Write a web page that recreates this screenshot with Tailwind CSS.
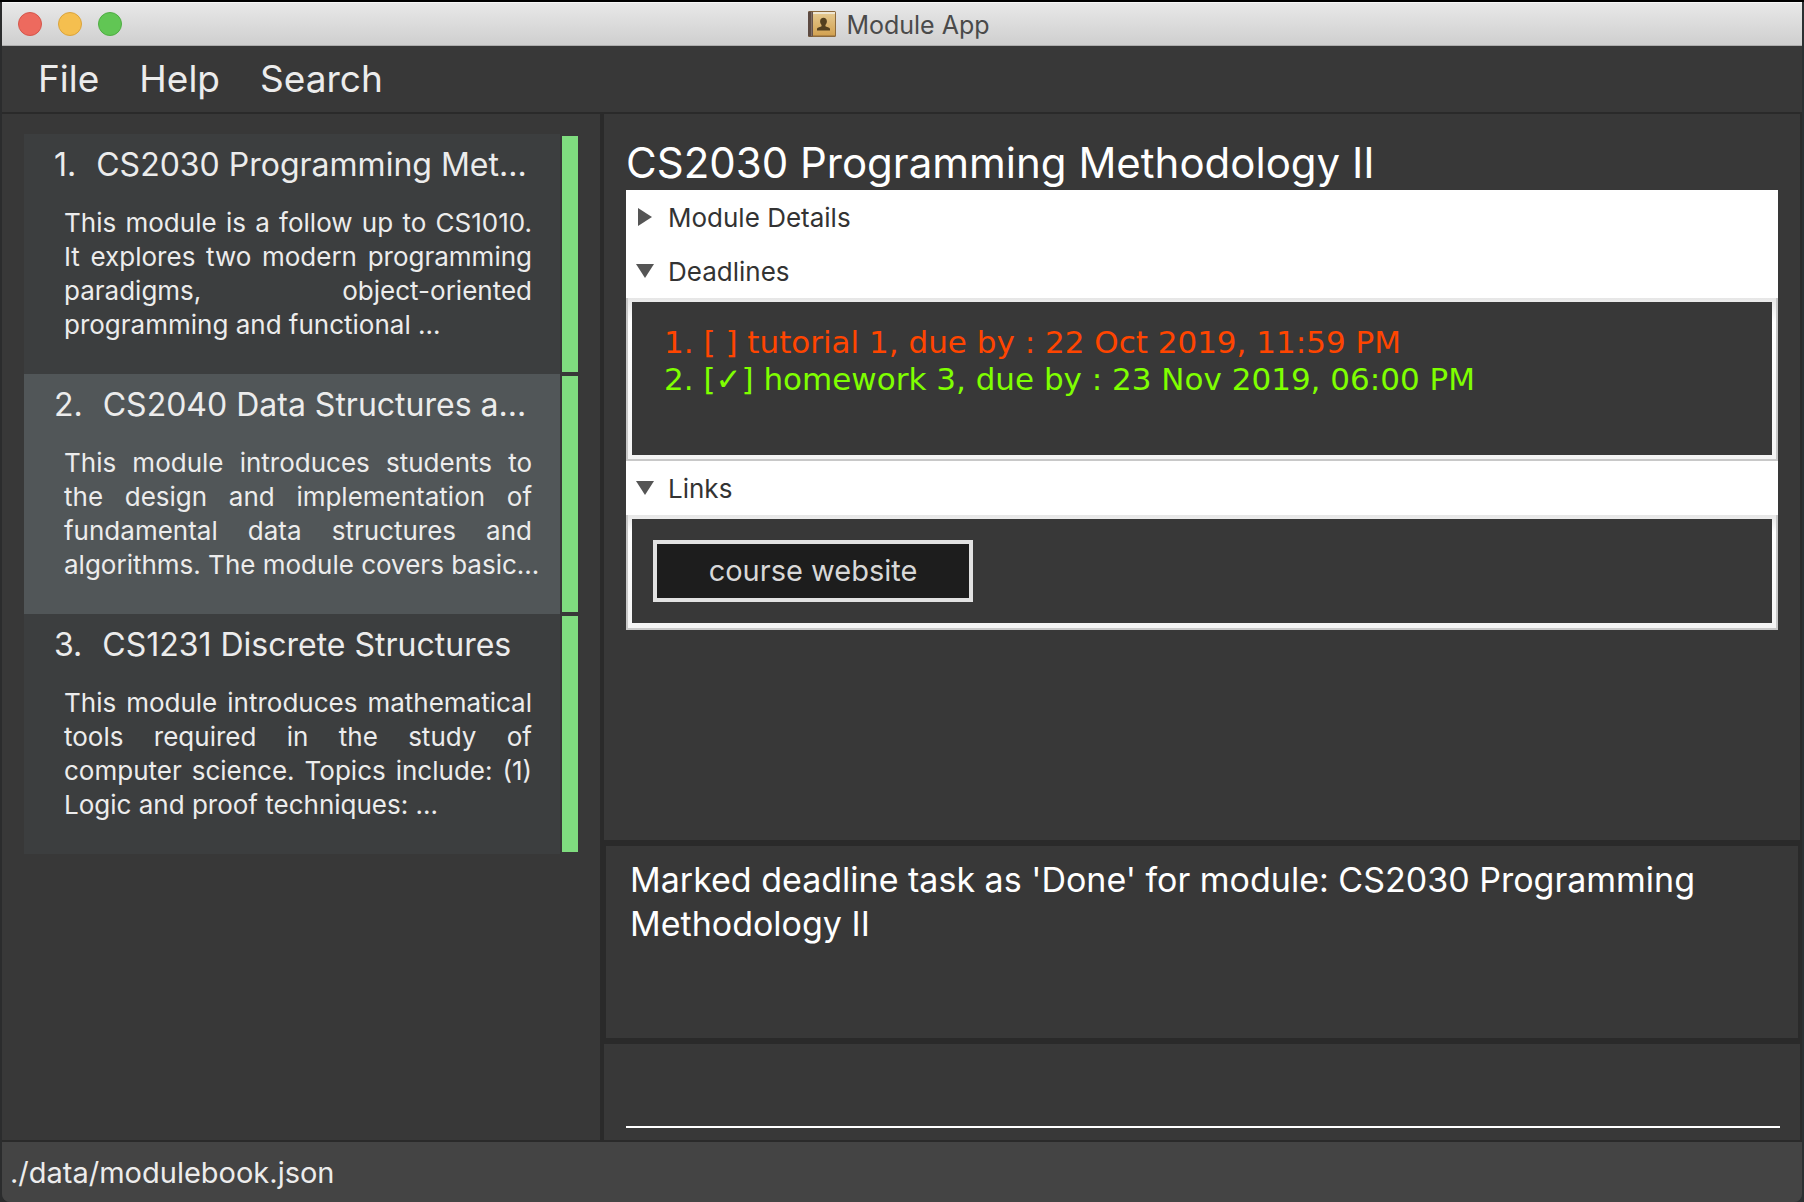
<!DOCTYPE html>
<html lang="en">
<head>
<meta charset="utf-8">
<title>Module App</title>
<script src="https://cdn.jsdelivr.net/npm/@tailwindcss/browser@4"></script>
</head>
<body class="bg-[#2b2c2d]">
<div class="h-screen bg-linear-to-r from-[#2b2c2d] to-[#2b3032] border-t-2 border-t-black px-[2px] font-['Inter',sans-serif] text-[#ececec]">
  <div class="h-full flex flex-col rounded-b-lg overflow-hidden bg-[#383838]">

    <header class="relative h-11 shrink-0 flex items-center justify-center gap-[10px] pr-[6px] bg-linear-to-b from-[#e8e8e8] to-[#cfcfcf] border-t border-t-[#f6f6f6] border-b border-b-[#aeaeae] text-[#4a4a4a]">
      <div class="absolute left-4 flex gap-4">
        <button aria-label="Close" class="size-6 rounded-full bg-[#ed6a5e] border border-[#d5564b]"></button>
        <button aria-label="Minimize" class="size-6 rounded-full bg-[#f5bf4f] border border-[#dba43c]"></button>
        <button aria-label="Zoom" class="size-6 rounded-full bg-[#61c654] border border-[#4fad43]"></button>
      </div>
      <svg class="w-7 h-[26px]" viewBox="0 0 28 26" aria-hidden="true">
        <defs><linearGradient id="cover" x1="0" y1="0" x2="0" y2="1"><stop offset="0" stop-color="#e3c68c"/><stop offset="1" stop-color="#d3a251"/></linearGradient></defs>
        <rect x="0" y="0" width="28" height="26" rx="1.5" fill="#8d6a3c"/>
        <rect x="5" y="1" width="22" height="2" fill="#efe6d3"/>
        <rect x="5" y="3" width="22" height="21.500" fill="url(#cover)"/>
        <rect x="0" y="0.500" width="5" height="25" rx="1" fill="#5c4a42"/>
        <rect x="3.200" y="1" width="1" height="24" fill="#8c7a70"/>
        <path d="M9 19.500v-1.600c0-1.200 2.500-1.700 4.200-2.400.5-.3.500-1.200.2-1.700-.9-1-1.300-2.200-1.300-3.500 0-2.200 1.400-3.600 3.400-3.600s3.400 1.400 3.400 3.600c0 1.300-.4 2.500-1.300 3.500-.3.500-.3 1.400.2 1.700 1.700.7 4.200 1.200 4.200 2.400v1.600z" fill="#54401f"/>
      </svg>
      <h1 class="pt-[2px] text-[25px] leading-8">Module App</h1>
    </header>

    <nav class="h-[68px] shrink-0 flex items-center gap-10 px-9 border-b-2 border-[#2a2a2a] text-[37px] leading-[44px]">
      <button>File</button>
      <button>Help</button>
      <button>Search</button>
    </nav>

    <main class="flex-1 min-h-0 grid grid-cols-[602fr_1198fr]">
      <aside class="min-w-0 border-r-4 border-[#2a2a2a] px-[22px] pt-5">
        <ul>
          <li class="h-60 flex gap-[2px]">
            <article class="flex-1 min-w-0 bg-[#3c3e3f] pt-2 whitespace-nowrap">
              <h2 class="flex gap-5 pl-[30px] text-[32px] leading-[46px]"><span>1.</span><span>CS2030 Programming Met...</span></h2>
              <p class="pt-[18px] pl-10 pr-7 text-[26px] leading-[34px]">
                <span class="block [text-align-last:justify]">This module is a follow up to CS1010.</span>
                <span class="block [text-align-last:justify]">It explores two modern programming</span>
                <span class="block [text-align-last:justify]">paradigms, object-oriented</span>
                <span class="block">programming and functional ...</span>
              </p>
            </article>
            <div class="w-4 my-[2px] bg-[#7fdc7f]"></div>
          </li>
          <li class="h-60 flex gap-[2px]">
            <article class="flex-1 min-w-0 bg-[#515658] pt-2 whitespace-nowrap">
              <h2 class="flex gap-5 pl-[30px] text-[32px] leading-[46px]"><span>2.</span><span>CS2040 Data Structures a...</span></h2>
              <p class="pt-[18px] pl-10 pr-7 text-[26px] leading-[34px]">
                <span class="block [text-align-last:justify]">This module introduces students to</span>
                <span class="block [text-align-last:justify]">the design and implementation of</span>
                <span class="block [text-align-last:justify]">fundamental data structures and</span>
                <span class="block">algorithms. The module covers basic...</span>
              </p>
            </article>
            <div class="w-4 my-[2px] bg-[#7fdc7f]"></div>
          </li>
          <li class="h-60 flex gap-[2px]">
            <article class="flex-1 min-w-0 bg-[#3c3e3f] pt-2 whitespace-nowrap">
              <h2 class="flex gap-5 pl-[30px] text-[32px] leading-[46px]"><span>3.</span><span>CS1231 Discrete Structures</span></h2>
              <p class="pt-[18px] pl-10 pr-7 text-[26px] leading-[34px]">
                <span class="block [text-align-last:justify]">This module introduces mathematical</span>
                <span class="block [text-align-last:justify]">tools required in the study of</span>
                <span class="block [text-align-last:justify]">computer science. Topics include: (1)</span>
                <span class="block">Logic and proof techniques: ...</span>
              </p>
            </article>
            <div class="w-4 my-[2px] bg-[#7fdc7f]"></div>
          </li>
        </ul>
      </aside>

      <div class="min-w-0 min-h-0 flex flex-col border-r-2 border-[#2a2a2a]">
        <section class="flex-1 min-h-0 px-[22px] pt-[22px]">
          <h2 class="text-[42px] leading-[54px] text-white whitespace-nowrap">CS2030 Programming Methodology II</h2>
          <details class="bg-white text-[#333]">
            <summary class="h-[54px] flex items-center gap-3 pl-[10px] text-[26px]">
              <svg class="size-5" viewBox="0 0 20 20" aria-hidden="true"><path d="M2 1L16 10L2 19z" fill="#555"/></svg>Module Details
            </summary>
          </details>
          <details open class="bg-white text-[#333]">
            <summary class="h-[54px] flex items-center gap-3 pl-[10px] text-[26px]">
              <svg class="size-5" viewBox="0 0 20 20" aria-hidden="true"><path d="M0 3H18L9 17z" fill="#555"/></svg>Deadlines
            </summary>
            <div class="border-x-2 border-b-2 border-[#c8c8c8] bg-linear-to-b from-[#e6e6e6] via-white via-15% to-[#f4f4f4] p-1">
              <ol class="h-[153px] bg-[#383838] pl-8 pt-[22px] font-['DejaVu_Sans',sans-serif] text-[31px] leading-[37px]">
                <li class="text-[#ff4500]">1. [ ] tutorial 1, due by : 22 Oct 2019, 11:59 PM</li>
                <li class="text-[#7fff00]">2. [✓] homework 3, due by : 23 Nov 2019, 06:00 PM</li>
              </ol>
            </div>
          </details>
          <details open class="bg-white text-[#333]">
            <summary class="h-[54px] flex items-center gap-3 pl-[10px] text-[26px]">
              <svg class="size-5" viewBox="0 0 20 20" aria-hidden="true"><path d="M0 3H18L9 17z" fill="#555"/></svg>Links
            </summary>
            <div class="border-x-2 border-b-2 border-[#c8c8c8] bg-linear-to-b from-[#e6e6e6] via-white via-15% to-[#f4f4f4] px-1 pt-1 pb-[5px]">
              <div class="bg-[#383838] pl-[21px] py-[21px]">
                <button class="block w-80 h-[62px] border-4 border-[#e2e2e2] bg-[#1d1d1d] text-[29px] text-[#d8d8d8]">course website</button>
              </div>
            </div>
          </details>
        </section>

        <output class="block h-[204px] shrink-0 border-y-6 border-x-2 border-[#2a2a2a] pl-6 pr-16 pt-3 text-[34px] leading-[44px] text-white">Marked deadline task as 'Done' for module: CS2030 Programming Methodology II</output>

        <form class="h-24 shrink-0 pr-5 pl-[22px] pb-3">
          <input type="text" aria-label="Command" class="block w-full h-full border-b-2 border-white bg-transparent text-[34px] text-white outline-none">
        </form>
      </div>
    </main>

    <footer class="h-[62px] shrink-0 flex items-center border-t-2 border-[#2a2a2a] bg-[#444] pt-[2px] pl-2 text-[29px] leading-9">./data/modulebook.json</footer>
  </div>
</div>
</body>
</html>
